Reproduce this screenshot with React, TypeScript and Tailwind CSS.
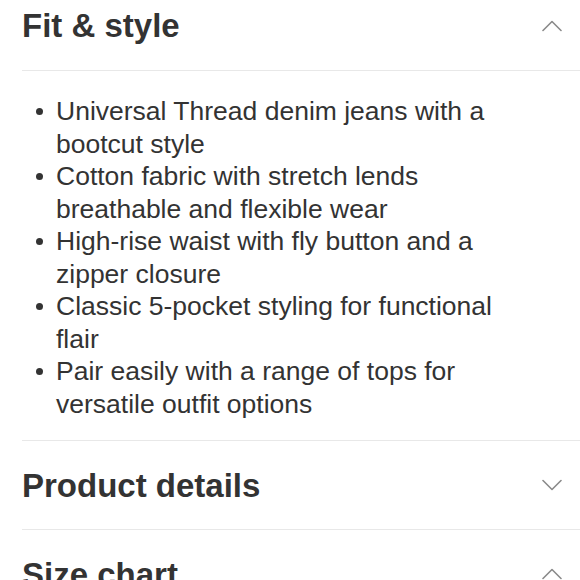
import React from "react";

const Chevron = ({ up }: { up?: boolean }) => (
  <svg width="20" height="12" viewBox="0 0 20 12" fill="none" className="shrink-0">
    <path
      d={up ? "M1 10.5 L10 1.5 L19 10.5" : "M1 1.5 L10 10.5 L19 1.5"}
      stroke="#8a8a8a"
      strokeWidth="1.6"
      strokeLinecap="round"
      strokeLinejoin="round"
    />
  </svg>
);

const items = [
  "Universal Thread denim jeans with a bootcut style",
  "Cotton fabric with stretch lends breathable and flexible wear",
  "High-rise waist with fly button and a zipper closure",
  "Classic 5-pocket styling for functional flair",
  "Pair easily with a range of tops for versatile outfit options",
];

export default function App() {
  return (
    <div
      className="w-[580px] h-[580px] overflow-hidden bg-white text-[#333333]"
      style={{ fontFamily: '"Liberation Sans", Arial, sans-serif' }}
    >
      <div className="ml-[22px]">
        <div className="flex h-[70px] items-center justify-between pb-[19px] pr-[18px]">
          <span className="text-[33px] font-bold leading-none">Fit &amp; style</span>
          <Chevron up />
        </div>
        <div className="border-t border-[#e8e8e8] pt-[24px] pb-[20px] pr-[40px]">
          <ul className="flex flex-col">
            {items.map((t) => (
              <li key={t} className="flex text-[26.5px] leading-[32.5px]">
                <span className="flex h-[32.5px] w-[34px] shrink-0 items-center pl-[14px]">
                  <span className="block h-[7px] w-[7px] rounded-full bg-[#333333]" />
                </span>
                <span className="max-w-[470px]">{t}</span>
              </li>
            ))}
          </ul>
        </div>
        <div className="flex h-[89px] items-center justify-between border-t border-[#e8e8e8] pr-[18px]">
          <span className="text-[33px] font-bold leading-none">Product details</span>
          <Chevron />
        </div>
        <div className="flex h-[89px] items-center justify-between border-t border-[#e8e8e8] pr-[18px]">
          <span className="text-[33px] font-bold leading-none">Size chart</span>
          <Chevron up />
        </div>
      </div>
    </div>
  );
}
